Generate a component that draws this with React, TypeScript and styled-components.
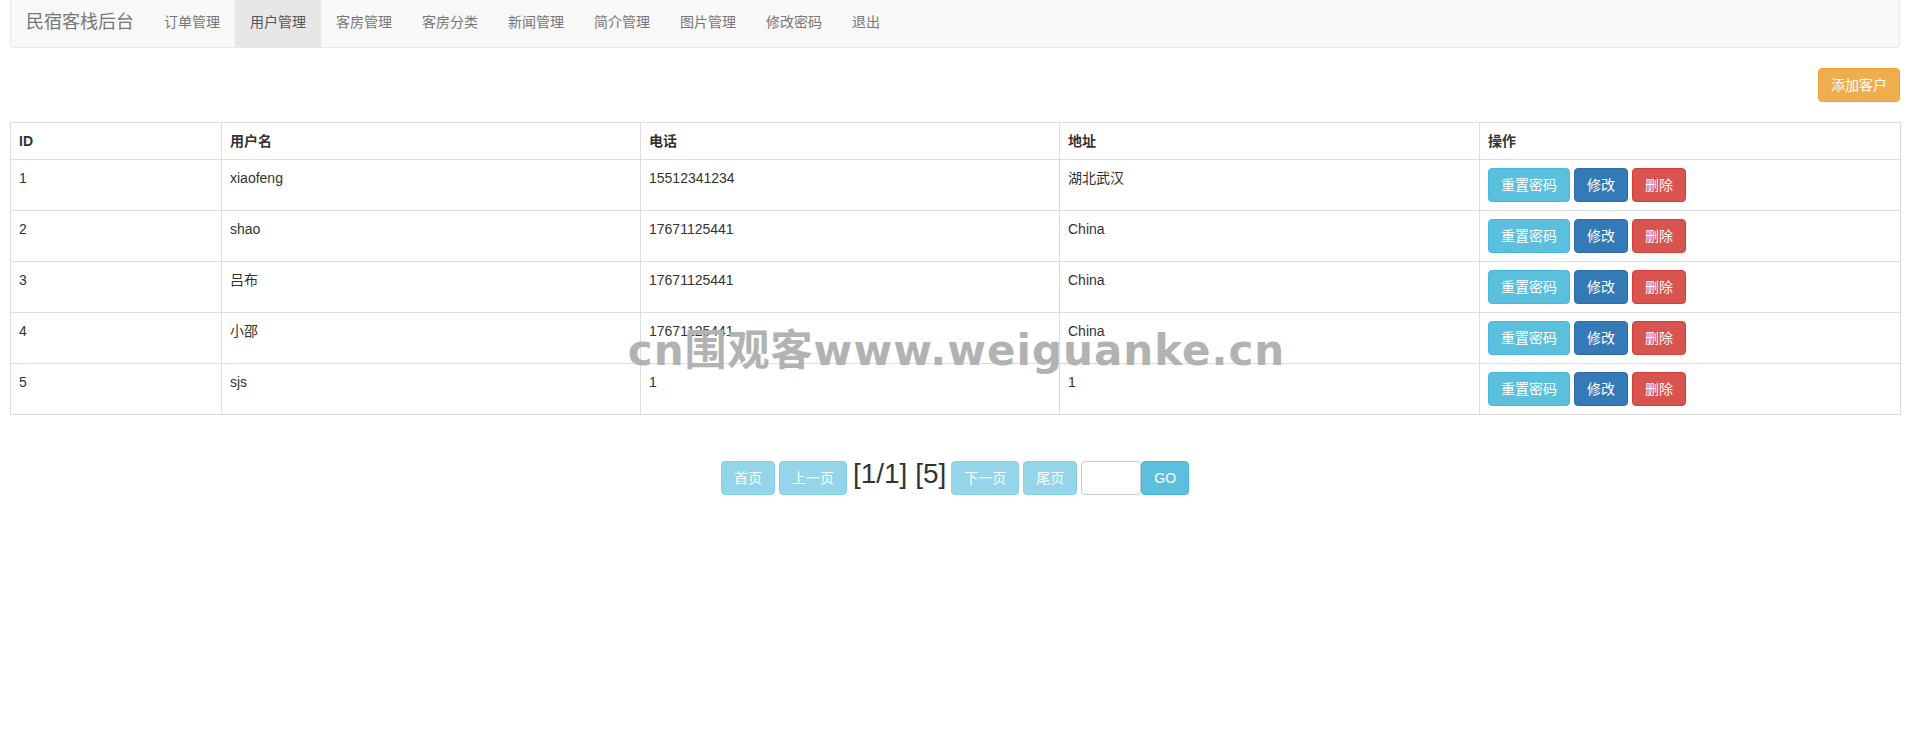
import styled, {createGlobalStyle} from "styled-components";

const GlobalStyle = createGlobalStyle`
  html, body {
    margin: 0;
    padding: 0;
    background: #fff;
  }
  body {
    font-family: "Liberation Sans", Arial, "Noto Sans CJK SC", sans-serif;
    font-size: 14px;
    line-height: 1.42857;
    color: #333;
  }
  * {
    box-sizing: border-box;
  }
`

const Page = styled.div`
  position: relative;
  padding: 0 13px 0 10px;
`

const Navbar = styled.nav`
  margin-top: -4px;
  margin-bottom: 20px;
  height: 52px;
  display: flex;
  align-items: stretch;
  background: #f8f8f8;
  border: 1px solid #e7e7e7;
  border-radius: 4px;
`

const Brand = styled.a`
  padding: 15px;
  font-size: 18px;
  line-height: 20px;
  color: #777;
  text-decoration: none;
`

const NavLink = styled.a<{ $active?: boolean }>`
  padding: 15px;
  line-height: 20px;
  color: ${p => p.$active ? "#555" : "#777"};
  background: ${p => p.$active ? "#e7e7e7" : "transparent"};
  text-decoration: none;
`

const Toolbar = styled.div`
  display: flex;
  justify-content: flex-end;
  margin-bottom: 20px;
`

const colors = {
    info: {bg: "#5bc0de", border: "#46b8da"},
    primary: {bg: "#337ab7", border: "#2e6da4"},
    danger: {bg: "#d9534f", border: "#d43f3a"},
    warning: {bg: "#f0ad4e", border: "#eea236"},
}

const Button = styled.button<{ $kind: keyof typeof colors; $disabled?: boolean }>`
  display: inline-block;
  height: 34px;
  padding: 6px 12px;
  font-family: inherit;
  font-size: 14px;
  line-height: 20px;
  color: #fff;
  white-space: nowrap;
  background: ${p => colors[p.$kind].bg};
  border: 1px solid ${p => colors[p.$kind].border};
  border-radius: 4px;
  opacity: ${p => p.$disabled ? 0.65 : 1};
  cursor: ${p => p.$disabled ? "not-allowed" : "pointer"};
`

const Table = styled.table`
  width: 1890px;
  table-layout: fixed;
  border-collapse: collapse;
  border: 1px solid #ddd;
`

const Th = styled.th`
  padding: 8px;
  text-align: left;
  vertical-align: bottom;
  font-weight: bold;
  line-height: 20px;
  border: 1px solid #ddd;
`

const Td = styled.td`
  padding: 8px;
  vertical-align: top;
  line-height: 20px;
  border: 1px solid #ddd;
`

const Actions = styled.div`
  display: flex;
  gap: 4px;
`

const Pager = styled.div`
  margin-top: 42px;
  display: flex;
  justify-content: center;
  align-items: baseline;
  gap: 4px;
`

const PageInfo = styled.span`
  font-size: 28px;
  line-height: 34px;
  color: #333;
  margin: 0 1px 0 2px;
`

const GoGroup = styled.div`
  display: flex;
  align-items: baseline;
`

const PageInput = styled.input`
  width: 60px;
  height: 34px;
  padding: 6px 8px;
  border: 1px solid #ccc;
  border-radius: 4px;
  font-size: 14px;
  align-self: center;
`

const Watermark = styled.div`
  position: absolute;
  top: 330px;
  left: 0;
  right: 0;
  text-align: center;
  font-family: "DejaVu Sans", "Noto Sans CJK SC", sans-serif;
  font-weight: bold;
  font-size: 42px;
  line-height: 50px;
  color: #b2b2b2;
  letter-spacing: 1px;
  pointer-events: none;
`

const users = [
    {id: 1, name: "xiaofeng", phone: "15512341234", addr: "湖北武汉"},
    {id: 2, name: "shao", phone: "17671125441", addr: "China"},
    {id: 3, name: "吕布", phone: "17671125441", addr: "China"},
    {id: 4, name: "小邵", phone: "17671125441", addr: "China"},
    {id: 5, name: "sjs", phone: "1", addr: "1"},
]

const navItems = ["订单管理", "用户管理", "客房管理", "客房分类", "新闻管理", "简介管理", "图片管理", "修改密码", "退出"]

const App = () => {
    return (
        <Page>
            <GlobalStyle/>
            <Navbar>
                <Brand>民宿客栈后台</Brand>
                {navItems.map(item => (
                    <NavLink key={item} $active={item === "用户管理"}>{item}</NavLink>
                ))}
            </Navbar>
            <Toolbar>
                <Button $kind="warning">添加客户</Button>
            </Toolbar>
            <Table>
                <colgroup>
                    <col style={{width: 211}}/>
                    <col style={{width: 419}}/>
                    <col style={{width: 419}}/>
                    <col style={{width: 420}}/>
                    <col style={{width: 421}}/>
                </colgroup>
                <thead>
                <tr>
                    <Th>ID</Th>
                    <Th>用户名</Th>
                    <Th>电话</Th>
                    <Th>地址</Th>
                    <Th>操作</Th>
                </tr>
                </thead>
                <tbody>
                {users.map(u => (
                    <tr key={u.id}>
                        <Td>{u.id}</Td>
                        <Td>{u.name}</Td>
                        <Td>{u.phone}</Td>
                        <Td>{u.addr}</Td>
                        <Td>
                            <Actions>
                                <Button $kind="info">重置密码</Button>
                                <Button $kind="primary">修改</Button>
                                <Button $kind="danger">删除</Button>
                            </Actions>
                        </Td>
                    </tr>
                ))}
                </tbody>
            </Table>
            <Pager>
                <Button $kind="info" $disabled>首页</Button>
                <Button $kind="info" $disabled>上一页</Button>
                <PageInfo>[1/1] [5]</PageInfo>
                <Button $kind="info" $disabled>下一页</Button>
                <Button $kind="info" $disabled>尾页</Button>
                <GoGroup>
                    <PageInput/>
                    <Button $kind="info">GO</Button>
                </GoGroup>
            </Pager>
            <Watermark>cn围观客www.weiguanke.cn</Watermark>
        </Page>
    )
}

export default App;
